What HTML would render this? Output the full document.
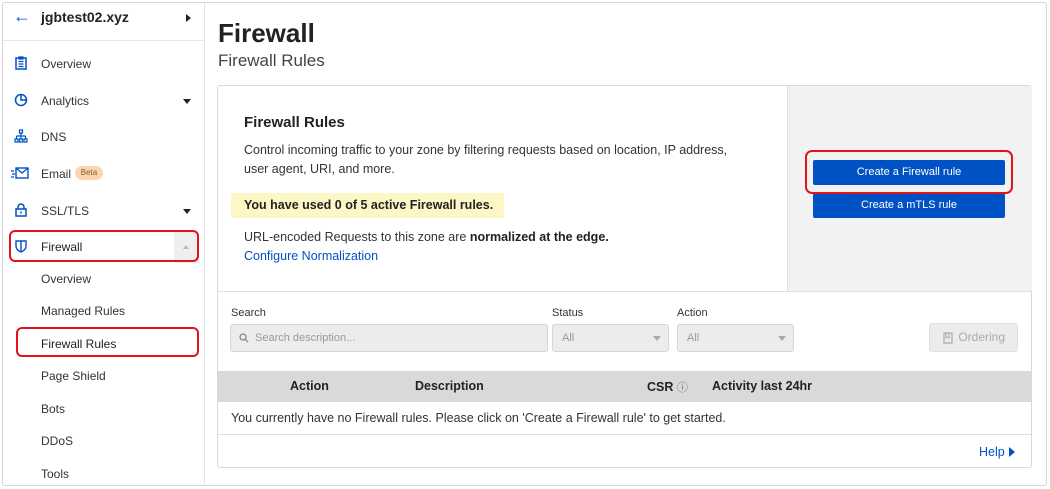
<!DOCTYPE html>
<html><head><style>
*{box-sizing:border-box;margin:0;padding:0}
body{width:1050px;height:489px;background:#fff;font-family:"Liberation Sans",sans-serif;color:#333;position:relative;overflow:hidden}
.frame{position:absolute;left:2px;top:2px;width:1045px;height:484px;border:1px solid #d6d6d6;border-radius:3px}
.side{position:absolute;left:3px;top:3px;width:202px;height:483px;border-right:1px solid #e2e2e2}
.hdr{position:absolute;left:0;top:0;width:202px;height:38px;border-bottom:1px solid #e6e6e6}
.t{position:absolute;font-size:12px;color:#333}
.ic{position:absolute;left:11px;width:14px;height:14px}
.arrow{position:absolute;left:180px;width:0;height:0;border-left:4px solid transparent;border-right:4px solid transparent;border-top:5px solid #222}
.red{position:absolute;border:2.5px solid #e0141e;border-radius:6px}
.card{position:absolute;left:217px;top:85px;width:815px;height:383px;border:1px solid #d9d9d9;border-radius:3px}
.btn{position:absolute;left:813px;width:192px;height:25px;background:#0051c3;color:#fff;font-size:11px;text-align:center;line-height:25px;border-radius:2px}
.inp{position:absolute;top:324px;height:28px;background:#ececec;border:1px solid #d6d6d6;border-radius:3px;font-size:11px;color:#999;line-height:26px}
.lbl{position:absolute;top:307px;font-size:11px;color:#333}
.caret{position:absolute;top:11px;border-left:4px solid transparent;border-right:4px solid transparent;border-top:5px solid #aaa}
</style></head><body>
<div class="frame"></div>
<div class="side">
 <div class="hdr">
  <div class="t" style="left:10px;top:3px;font-size:18px;color:#0051c3">&#8592;</div>
  <div class="t" style="left:38px;top:6px;font-size:14px;font-weight:bold;color:#222">jgbtest02.xyz</div>
  <div style="position:absolute;left:183px;top:11px;border-top:4px solid transparent;border-bottom:4px solid transparent;border-left:5px solid #222"></div>
 </div>
 <svg class="ic" style="top:53px" viewBox="0 0 14 14"><rect x="2" y="2" width="10" height="11" fill="none" stroke="#0051c3" stroke-width="1.5"/><path d="M4.5 5.5h5M4.5 8h5M4.5 10.5h5M5 1h4v2H5z" stroke="#0051c3" stroke-width="1.2" fill="none"/></svg>
 <div class="t" style="left:38px;top:54px">Overview</div>
 <svg class="ic" style="top:90px" viewBox="0 0 14 14"><circle cx="7" cy="7" r="5.5" fill="none" stroke="#0051c3" stroke-width="1.5"/><path d="M7 1.5V7h5.5" fill="none" stroke="#0051c3" stroke-width="1.5"/></svg>
 <div class="t" style="left:38px;top:91px">Analytics</div><div class="arrow" style="top:96px"></div>
 <svg class="ic" style="top:126px" viewBox="0 0 14 14"><path d="M5.5 1h3v3h-3zM7 4v3M2.5 7h9M2.5 7v3M7 7v3M11.5 7v3M1 10h3v3H1zM5.5 10h3v3h-3zM10 10h3v3h-3z" fill="none" stroke="#0051c3" stroke-width="1.2"/></svg>
 <div class="t" style="left:38px;top:127px">DNS</div>
 <svg class="ic" style="top:163px;left:8px;width:18px" viewBox="0 0 18 14"><rect x="5" y="2" width="12" height="10" fill="none" stroke="#0051c3" stroke-width="1.4"/><path d="M5 2l6 5 6-5M0 5h3M1 8h3M0 11h3" fill="none" stroke="#0051c3" stroke-width="1.3"/></svg>
 <div class="t" style="left:38px;top:164px">Email</div>
 <div style="position:absolute;left:72px;top:163px;width:28px;height:14px;background:#fbd5b0;border-radius:7px;font-size:8px;color:#8a5a2a;text-align:center;line-height:14px">Beta</div>
 <svg class="ic" style="top:200px" viewBox="0 0 14 14"><rect x="2" y="6" width="10" height="7" fill="none" stroke="#0051c3" stroke-width="1.5"/><path d="M4 6V4a3 3 0 0 1 6 0v2M7 8.5v2" fill="none" stroke="#0051c3" stroke-width="1.5"/></svg>
 <div class="t" style="left:38px;top:201px">SSL/TLS</div><div class="arrow" style="top:206px"></div>
 <div style="position:absolute;left:171px;top:229px;width:25px;height:31px;background:#efefef"></div>
 <div style="position:absolute;left:180px;top:242px;border-left:3px solid transparent;border-right:3px solid transparent;border-bottom:4px solid #bbb"></div>
 <svg class="ic" style="top:236px" viewBox="0 0 14 14"><path d="M2 2h10v5c0 3-2.5 5-5 6-2.5-1-5-3-5-6z M7 2v11" fill="none" stroke="#0051c3" stroke-width="1.4"/></svg>
 <div class="t" style="left:38px;top:237px;color:#222">Firewall</div>
 <div class="t" style="left:38px;top:269px">Overview</div>
 <div class="t" style="left:38px;top:301px">Managed Rules</div>
 <div class="t" style="left:38px;top:334px;color:#222">Firewall Rules</div>
 <div class="t" style="left:38px;top:366px">Page Shield</div>
 <div class="t" style="left:38px;top:399px">Bots</div>
 <div class="t" style="left:38px;top:431px">DDoS</div>
 <div class="t" style="left:38px;top:464px">Tools</div>
</div>
<div class="red" style="left:9px;top:230px;width:190px;height:32px"></div>
<div class="red" style="left:16px;top:327px;width:183px;height:30px"></div>

<div class="t" style="left:218px;top:18px;font-size:26px;font-weight:bold;color:#222">Firewall</div>
<div class="t" style="left:218px;top:51px;font-size:17px;color:#444">Firewall Rules</div>

<div class="card">
 <div style="position:absolute;left:569px;top:0;width:245px;height:205px;background:#f2f2f2;border-left:1px solid #e0e0e0"></div>
 <div style="position:absolute;left:0;top:205px;width:813px;border-top:1px solid #e0e0e0"></div>
 <div style="position:absolute;left:0;top:285px;width:813px;height:31px;background:#d9d9d9"></div>
 <div style="position:absolute;left:0;top:348px;width:813px;border-top:1px solid #e0e0e0"></div>
</div>
<div class="t" style="left:244px;top:114px;font-size:15px;font-weight:bold;color:#222">Firewall Rules</div>
<div class="t" style="left:244px;top:141px;font-size:12.5px;line-height:19px;width:500px">Control incoming traffic to your zone by filtering requests based on location, IP address, user agent, URI, and more.</div>
<div style="position:absolute;left:231px;top:193px;width:273px;height:25px;background:#fcf7c4"></div>
<div class="t" style="left:244px;top:198px;font-size:12.5px;font-weight:bold;color:#222">You have used 0 of 5 active Firewall rules.</div>
<div class="t" style="left:244px;top:230px;font-size:12.5px">URL-encoded Requests to this zone are <b style="color:#222">normalized at the edge.</b></div>
<div class="t" style="left:244px;top:249px;font-size:12.5px;color:#0051c3">Configure Normalization</div>
<div class="btn" style="top:160px">Create a Firewall rule</div>
<div class="btn" style="top:193px">Create a mTLS rule</div>
<div class="red" style="left:805px;top:150px;width:208px;height:44px;border-radius:7px"></div>

<div class="lbl" style="left:231px">Search</div>
<div class="lbl" style="left:552px">Status</div>
<div class="lbl" style="left:677px">Action</div>
<div class="inp" style="left:230px;width:318px;padding-left:24px">Search description...
 <svg style="position:absolute;left:8px;top:8px" width="10" height="10" viewBox="0 0 10 10"><circle cx="4" cy="4" r="3" fill="none" stroke="#888" stroke-width="1.3"/><path d="M6.3 6.3L9 9" stroke="#888" stroke-width="1.3"/></svg></div>
<div class="inp" style="left:552px;width:117px;padding-left:9px">All<div class="caret" style="left:100px"></div></div>
<div class="inp" style="left:677px;width:117px;padding-left:9px">All<div class="caret" style="left:100px"></div></div>
<div class="inp" style="left:929px;width:89px;height:29px;top:323px;text-align:right;padding-right:12px;color:#aaa;font-size:12px;border-color:#e0e0e0">
 <svg style="position:absolute;left:13px;top:8px" width="10" height="12" viewBox="0 0 10 12"><rect x="1" y="1" width="8" height="10" fill="none" stroke="#aaa" stroke-width="1.2"/><path d="M3 1v5l1.5-1 1.5 1V1" fill="none" stroke="#aaa"/></svg>Ordering</div>

<div class="t" style="left:290px;top:379px;font-size:12.5px;font-weight:bold;color:#222">Action</div>
<div class="t" style="left:415px;top:379px;font-size:12.5px;font-weight:bold;color:#222">Description</div>
<div class="t" style="left:647px;top:379px;font-size:12.5px;font-weight:bold;color:#222">CSR <span style="font-weight:normal;color:#777;font-size:11px">&#9432;</span></div>
<div class="t" style="left:712px;top:379px;font-size:12.5px;font-weight:bold;color:#222">Activity last 24hr</div>
<div class="t" style="left:231px;top:411px;font-size:12.5px">You currently have no Firewall rules. Please click on 'Create a Firewall rule' to get started.</div>
<div class="t" style="left:979px;top:445px;font-size:12.5px;color:#0051c3">Help</div>
<div style="position:absolute;left:1009px;top:447px;border-top:5px solid transparent;border-bottom:5px solid transparent;border-left:6px solid #0051c3"></div>
</body></html>
